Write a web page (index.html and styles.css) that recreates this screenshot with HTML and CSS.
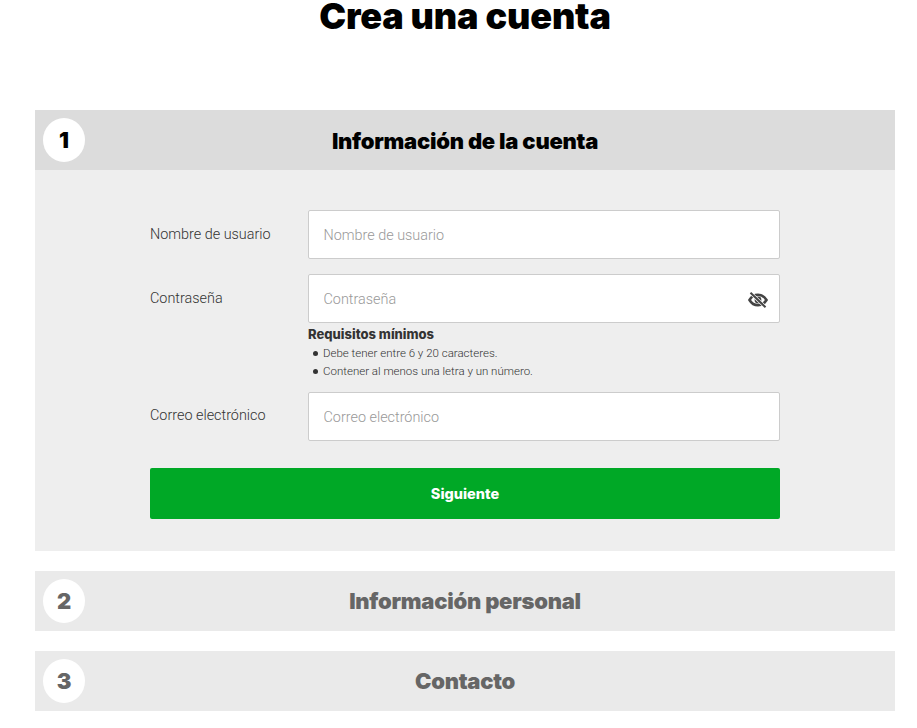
FILE: index.html
```html
<!DOCTYPE html>
<html lang="es">
<head>
<meta charset="utf-8">
<title>Crea una cuenta</title>
<link rel="stylesheet" href="styles.css">
</head>
<body>
<main class="page">
  <h1 class="title">Crea una cuenta</h1>
  <section class="step step-active">
    <header class="step-head">
      <span class="step-num">1</span>
      <h2 class="step-title">Información de la cuenta</h2>
    </header>
    <form class="step-body">
      <div class="row">
        <label class="label" for="u">Nombre de usuario</label>
        <div class="field"><input class="input" id="u" type="text" placeholder="Nombre de usuario"></div>
      </div>
      <div class="row">
        <label class="label" for="p">Contraseña</label>
        <div class="field">
          <input class="input" id="p" type="text" placeholder="Contraseña">
          <svg class="eye" viewBox="0 0 20 16" width="20" height="16" aria-hidden="true">
            <path d="M1.500 8c2-3.400 4.800-5.200 8.500-5.200S16.500 4.600 18.500 8c-2 3.400-4.800 5.200-8.500 5.200S3.500 11.400 1.500 8z" fill="none" stroke="#444" stroke-width="2.600"/>
            <circle cx="10" cy="8" r="3.400" fill="#444"/>
            <path d="M2.500 .8 17.500 15.200" stroke="#fff" stroke-width="3.400"/>
            <path d="M2.500 .8 17.500 15.200" stroke="#444" stroke-width="2"/>
          </svg>
        </div>
      </div>
      <div class="reqs">
        <strong class="reqs-title">Requisitos mínimos</strong>
        <ul class="reqs-list">
          <li class="req">Debe tener entre 6 y 20 caracteres.</li>
          <li class="req">Contener al menos una letra y un número.</li>
        </ul>
      </div>
      <div class="row">
        <label class="label label-email" for="c">Correo electrónico</label>
        <div class="field"><input class="input" id="c" type="text" placeholder="Correo electrónico"></div>
      </div>
      <button class="next" type="button">Siguiente</button>
    </form>
  </section>
  <section class="step">
    <header class="step-head">
      <span class="step-num">2</span>
      <h2 class="step-title">Información personal</h2>
    </header>
  </section>
  <section class="step">
    <header class="step-head">
      <span class="step-num">3</span>
      <h2 class="step-title">Contacto</h2>
    </header>
  </section>
</main>
</body>
</html>
```
FILE: styles.css
```css
* { box-sizing: border-box; }
html, body { margin: 0; padding: 0; background: #fff; }
body { font-family: Roboto, "Liberation Sans", sans-serif; color: #333; }
.page { width: 860px; margin-left: 35px; display: flex; flex-direction: column; gap: 20px; }
.title {
  margin: 0 0 57px;
  height: 33px;
  font-family: Inter, sans-serif;
  font-size: 36px;
  line-height: 33px;
  font-weight: 900;
  letter-spacing: -0.150px;
  text-align: center;
  color: #000;
}
.step-head {
  position: relative;
  height: 60px;
  display: flex;
  align-items: center;
  justify-content: center;
  background: #eaeaea;
  color: #666;
}
.step-active .step-head { background: #dcdcdc; color: #000; }
.step-num {
  position: absolute;
  left: 8px;
  top: 8px;
  width: 42px;
  height: 44px;
  border-radius: 50%;
  background: #fff;
  display: flex;
  align-items: center;
  justify-content: center;
  font-family: Inter, sans-serif;
  font-size: 22px;
  font-weight: 900;
}
.step-title {
  margin: 0;
  font-family: Inter, sans-serif;
  font-size: 22px;
  font-weight: 900;
  line-height: 1;
  letter-spacing: -0.250px;
}
.step-active .step-title { margin-top: 2px; }
.step-body {
  background: #eee;
  padding: 40px 115px 32px;
  display: flex;
  flex-direction: column;
}
.row { display: flex; margin-bottom: 15px; }
.label {
  width: 158px;
  flex: none;
  padding-top: 16px;
  font-size: 14.400px;
  line-height: 17px;
  font-weight: 300;
  color: #333;
}
.label-email { padding-top: 15px; }
.field { position: relative; flex: 1; }
.input {
  display: block;
  width: 100%;
  height: 49px;
  padding: 2px 15px 0 14.500px;
  border: 1px solid #ccc;
  border-radius: 2px;
  background: #fff;
  font: 300 14.400px Roboto, sans-serif;
  color: #333;
}
.input::placeholder { color: #999; opacity: 1; }
.eye { position: absolute; right: 12px; top: 18px; }
.reqs { margin: -12px 0 12px 158px; font-size: 11.500px; line-height: 18px; font-weight: 300; color: #333; }
.reqs-title { display: block; font-family: Inter, sans-serif; font-size: 13px; line-height: 17px; font-weight: 800; color: #333; }
.reqs-list { margin: 1px 0 0; padding: 0 0 0 5px; list-style: none; }
.req { display: flex; align-items: center; gap: 5px; }
.req::before { content: ""; width: 5px; height: 5px; border-radius: 50%; background: #333; flex: none; }
.next {
  height: 51px;
  margin-top: 12px;
  border: 0;
  border-radius: 2px;
  background: #00a826;
  color: #fff;
  font: 800 14.500px Inter, sans-serif;
}
```
